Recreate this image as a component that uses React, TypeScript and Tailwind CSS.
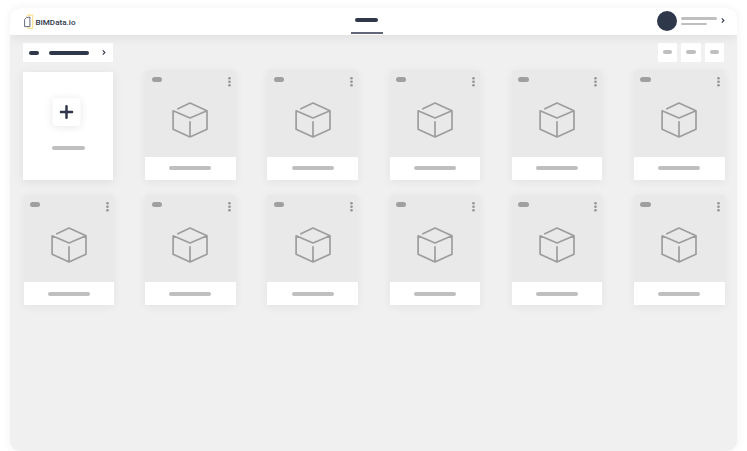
import React from "react";

function Cube() {
  return (
    <svg className="block h-[38px] w-[38px]" viewBox="0 0 38 38" fill="none" stroke="#9d9d9d" strokeWidth="1.7" strokeLinecap="round" strokeLinejoin="round">
      <path d="M6.9 7.8 19 2.1 36 9.8 19 17 2.1 9.8V28.2L19 35.9 36 28.2V9.8M19 20.8V35.6" />
    </svg>
  );
}

function Dots() {
  return (
    <svg className="block h-[10px] w-[3px]" viewBox="0 0 3 10" fill="#949494">
      <circle cx="1.5" cy="1.3" r="1.3" />
      <circle cx="1.5" cy="4.8" r="1.3" />
      <circle cx="1.5" cy="8.2" r="1.3" />
    </svg>
  );
}

function Chevron() {
  return (
    <svg className="block h-[5px] w-[4px]" viewBox="0 0 4 5" fill="none" stroke="#2f374a" strokeWidth="1.1">
      <path d="M.8.4 2.9 2.5.8 4.6" />
    </svg>
  );
}

function Logo() {
  return (
    <svg className="block h-[17px] w-[11px]" viewBox="0 0 11 17" fill="none">
      <path d="M1.8 3.8 5.4 1.1V2.6L8.7 2V15.3H3.7V14.2" stroke="#fbdc79" strokeWidth="1" />
      <path d="M.6 6.5 2.4 4.7 5.9 4V13.6H.6Z" stroke="#555b6c" strokeWidth=".9" />
    </svg>
  );
}

function ModelCard({ nudge = false }: { nudge?: boolean }) {
  return (
    <div className={`h-[109.6px] w-[90.6px] bg-[#e9e9e9] rounded-t-[3px] shadow-[0_2px_10px_rgba(0,0,0,0.06)] ${nudge ? "ml-[0.6px]" : ""}`}>
      <div className="h-[87px]">
        <div className="flex h-[31px] items-start justify-between pt-[7px] pr-[5px] pl-[6.4px]">
          <div className="h-[4.8px] w-[10.4px] rounded-full bg-[#a0a0a0]" />
          <Dots />
        </div>
        <div className="flex justify-center">
          <Cube />
        </div>
      </div>
      <div className="flex h-[22.6px] items-center justify-center bg-white">
        <div className="h-[4px] w-[42px] rounded-full bg-[#bfbfbf]" />
      </div>
    </div>
  );
}

function AddCard() {
  return (
    <div className="mt-[2px] flex h-[107.6px] w-[90.4px] flex-col items-center bg-white pt-[26px] shadow-[0_2px_10px_rgba(0,0,0,0.08)]">
      <div className="flex h-[28px] w-[28px] translate-x-[-1.5px] items-center justify-center rounded-[4px] bg-white shadow-[0_1px_8px_rgba(0,0,0,0.1)]">
        <svg className="h-[14px] w-[14px]" viewBox="0 0 14 14" stroke="#2f374a" strokeWidth="2.5" strokeLinecap="round">
          <path d="M7 1.3V12.7M1.3 7H12.7" />
        </svg>
      </div>
      <div className="mt-[19.8px] h-[4px] w-[33px] rounded-full bg-[#bfbfbf]" />
    </div>
  );
}

export default function App() {
  return (
    <div className="h-[451px] w-[747px] overflow-hidden bg-white pt-[8px] pl-[10px] font-['Roboto',sans-serif]">
      <div className="h-[442.6px] w-[727px] overflow-hidden rounded-[10px] bg-[#f0f0f0] shadow-[0_0_10px_rgba(0,0,0,0.06)]">
        <header className="relative flex h-[26.6px] justify-between bg-white pr-[12px] pl-[14px] shadow-[0_2px_12px_rgba(0,0,0,0.08)]">
          <div className="flex w-[200px] items-start pt-[5px]">
            <Logo />
            <span className="mt-[3.5px] ml-[0.4px] text-[8.1px] leading-[11px] font-medium text-[#2f374a]">BIMData.io</span>
          </div>
          <div className="flex w-[32px] translate-x-[-8px] flex-col items-center justify-between pt-[9.8px] pb-[0.8px]">
            <div className="h-[4px] w-[23px] rounded-full bg-[#2f374a]" />
            <div className="h-[1.6px] w-[32px] bg-[#62677a]" />
          </div>
          <div className="flex w-[200px] justify-end pt-[3px]">
            <div className="h-[20px] w-[20px] rounded-full bg-[#2f374a]" />
            <div className="ml-[4px] pt-[5.8px]">
              <div className="h-[3px] w-[36.5px] rounded-full bg-[#bfbfbf]" />
              <div className="mt-[3px] h-[2.4px] w-[26px] rounded-full bg-[#bfbfbf]" />
            </div>
            <div className="mt-[7.3px] ml-[4px]">
              <Chevron />
            </div>
          </div>
        </header>
        <main className="pt-[8.4px] pl-[13px]">
          <div className="flex w-[701.4px] justify-between">
            <div className="flex h-[19.4px] w-[90.4px] items-center bg-white pl-[6px]">
              <div className="h-[4px] w-[10px] rounded-full bg-[#2f374a]" />
              <div className="ml-[10.3px] h-[4px] w-[39.5px] rounded-full bg-[#2f374a]" />
              <div className="ml-[12.8px]">
                <Chevron />
              </div>
            </div>
            <div className="flex gap-[4.1px]">
              {[0, 1, 2].map((n) => (
                <div key={n} className="flex h-[19px] w-[19.5px] items-center justify-center bg-white">
                  <div className="h-[4px] w-[9.6px] rounded-full bg-[#bfbfbf]" />
                </div>
              ))}
            </div>
          </div>
          <div className="mt-[7.6px] grid grid-cols-[repeat(6,90.6px)] gap-x-[31.6px] gap-y-[15.8px]">
            <AddCard />
            {Array.from({ length: 11 }, (_, n) => (
              <ModelCard key={n} nudge={n === 5} />
            ))}
          </div>
        </main>
      </div>
    </div>
  );
}
